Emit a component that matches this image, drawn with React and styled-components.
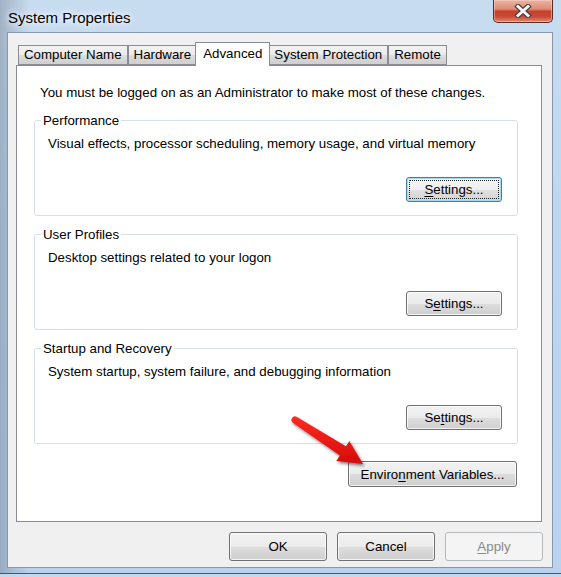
import styled, { createGlobalStyle } from "styled-components";

const GlobalStyle = createGlobalStyle`
  html, body {
    margin: 0;
    padding: 0;
    overflow: hidden;
    background: #c9d3dc;
  }
  * {
    box-sizing: border-box;
  }
`;

const Window = styled.div`
  position: relative;
  width: 561px;
  height: 577px;
  display: flex;
  flex-direction: column;
  padding: 0 8px 9px 7px;
  font-family: "Liberation Sans", Arial, sans-serif;
  font-size: 13.3px;
  color: #000;
  background:
    linear-gradient(to right, rgba(90, 100, 115, 0.35) 0px, rgba(90, 100, 115, 0) 30px),
    linear-gradient(180deg, #c8dcf0 0%, #bed6ee 40%, #b9d3ee 100%);
  box-shadow: inset 0 -3px 0 #c5d9ee, inset 0 -4px 0 #4b5563;
`;

const TitleBar = styled.div`
  height: 33px;
  display: flex;
  align-items: flex-start;
`;

const Title = styled.h1`
  margin: 9px 0 0 1px;
  font-size: 15px;
  font-weight: normal;
  line-height: 17px;
  color: #000;
  text-shadow: 0 0 6px #fff, 0 0 10px #fff;
`;

const CloseButton = styled.button`
  margin-left: auto;
  width: 60px;
  height: 23px;
  padding: 0;
  display: flex;
  align-items: center;
  justify-content: center;
  border: 1px solid #5e2b25;
  border-top: none;
  border-radius: 0 0 5px 5px;
  background: linear-gradient(
    180deg,
    #eab3a2 0%,
    #df8d77 40%,
    #c8402c 52%,
    #c94a35 75%,
    #de8b70 100%
  );
  box-shadow: inset 0 0 0 1px rgba(255, 220, 210, 0.45);
`;

const ClientArea = styled.div`
  flex: 1;
  display: flex;
  flex-direction: column;
  background: #f0f0f0;
  border: 1px solid #8796aa;
  padding: 9px 0 6px 0;
`;

const TabStrip = styled.div`
  display: flex;
  align-items: flex-end;
  height: 24px;
  margin-bottom: -1px;
  padding-left: 10px;
`;

const Tab = styled.div`
  position: relative;
  display: flex;
  align-items: center;
  height: ${(p) => (p.$active ? "24px" : "20px")};
  margin: ${(p) => (p.$active ? "0 -2px" : "0 0 1px 0")};
  padding: ${(p) => (p.$active ? "0 7px 2px" : "0 5px 1px")};
  border: 1px solid #898c95;
  border-bottom: ${(p) => (p.$active ? "none" : "1px solid #898c95")};
  background: ${(p) =>
    p.$active
      ? "#fff"
      : "linear-gradient(180deg, #f2f2f2 0%, #ebebeb 50%, #dddddd 51%, #cfcfcf 100%)"};
  z-index: ${(p) => (p.$active ? 2 : 1)};
  white-space: nowrap;
`;

const Panel = styled.div`
  height: 457px;
  margin: 0 10px 0 8px;
  background: #fff;
  border: 1px solid #898c95;
  padding: 19px 23px 0 17px;
  display: flex;
  flex-direction: column;
`;

const Intro = styled.p`
  margin: 0 0 0 6px;
  line-height: 15px;
`;

const GroupBox = styled.fieldset`
  margin: ${(p) => (p.$first ? "13px" : "11px")} 0 0;
  padding: 0 15px 13px 13px;
  border: 1px solid #d5dfe5;
  border-radius: 3px;
`;

const GroupLabel = styled.legend`
  margin-left: -7px;
  padding: 0 2px;
  line-height: 15px;
`;

const GroupText = styled.p`
  margin: 8px 0 0;
  line-height: 15px;
`;

const ButtonRow = styled.div`
  display: flex;
  justify-content: flex-end;
  margin-top: ${(p) => p.$top || "0"};
  margin-right: ${(p) => p.$right || "0"};
  gap: 10px;
`;

const Button = styled.button`
  position: relative;
  width: ${(p) => p.$width || "96px"};
  height: ${(p) => p.$height || "25px"};
  padding: 0;
  font-family: inherit;
  font-size: 13.3px;
  color: ${(p) => (p.disabled ? "#8a8a8a" : "#000")};
  border: 1px solid
    ${(p) => (p.disabled ? "#b5b9bc" : p.$focused ? "#3c7fb1" : "#707070")};
  border-radius: 3px;
  background: ${(p) =>
    p.disabled
      ? "#f4f4f4"
      : p.$focused
      ? "linear-gradient(180deg, #f6f6f6 0%, #eeeeee 50%, #e0e0e0 51%, #d4d4d4 100%)"
      : "linear-gradient(180deg, #f2f2f2 0%, #ebebeb 50%, #dddddd 51%, #cfcfcf 100%)"};
  box-shadow: ${(p) =>
    p.disabled
      ? "none"
      : p.$focused
      ? "inset 0 0 0 1px #a8d8f2"
      : "inset 0 0 0 1px rgba(255, 255, 255, 0.75)"};

  &::after {
    content: "";
    display: ${(p) => (p.$focused ? "block" : "none")};
    position: absolute;
    inset: 2px;
    border: 1px dotted #222;
    border-radius: 1px;
  }

  u {
    text-decoration-thickness: 1px;
    text-underline-offset: 2px;
  }
`;

const Arrow = styled.svg`
  position: absolute;
  left: 285px;
  top: 408px;
  width: 90px;
  height: 66px;
  overflow: visible;
`;

const CloseGlyph = () => (
  <svg width="18" height="14" viewBox="0 0 18 14">
    <path d="M4 2.5 L14 11.5 M14 2.5 L4 11.5" stroke="#3f3f46" strokeWidth="5.2" strokeLinecap="square" fill="none" />
    <path d="M4 2.5 L14 11.5 M14 2.5 L4 11.5" stroke="#f5f5f5" strokeWidth="3" strokeLinecap="square" fill="none" />
  </svg>
);

const RedArrow = () => (
  <Arrow viewBox="0 0 90 66">
    <defs>
      <linearGradient id="arrowFill" x1="0" y1="0" x2="0" y2="1">
        <stop offset="0" stopColor="#ff2a22" />
        <stop offset="1" stopColor="#d30c0a" />
      </linearGradient>
      <filter id="arrowShadow" x="-20%" y="-20%" width="150%" height="150%">
        <feDropShadow dx="1.5" dy="2" stdDeviation="1.5" floodColor="#000" floodOpacity="0.5" />
      </filter>
    </defs>
    <path
      d="M11.9 9.06 L60.84 38.34 L64.37 32.88 L78 56 L51.33 53.04 L54.86 47.58 L8.1 14.94 A3.5 3.5 0 0 1 11.9 9.06 Z"
      fill="url(#arrowFill)"
      filter="url(#arrowShadow)"
    />
  </Arrow>
);

const groups = [
  {
    label: "Performance",
    text: "Visual effects, processor scheduling, memory usage, and virtual memory",
    before: "",
    key: "S",
    after: "ettings...",
    focused: true,
  },
  {
    label: "User Profiles",
    text: "Desktop settings related to your logon",
    before: "S",
    key: "e",
    after: "ttings...",
  },
  {
    label: "Startup and Recovery",
    text: "System startup, system failure, and debugging information",
    before: "Se",
    key: "t",
    after: "tings...",
  },
];

const tabs = ["Computer Name", "Hardware", "Advanced", "System Protection", "Remote"];

export default function App() {
  return (
    <>
      <GlobalStyle />
      <Window>
        <TitleBar>
          <Title>System Properties</Title>
          <CloseButton aria-label="Close">
            <CloseGlyph />
          </CloseButton>
        </TitleBar>
        <ClientArea>
          <TabStrip>
            {tabs.map((t) => (
              <Tab key={t} $active={t === "Advanced"}>
                {t}
              </Tab>
            ))}
          </TabStrip>
          <Panel>
            <Intro>You must be logged on as an Administrator to make most of these changes.</Intro>
            {groups.map((g, i) => (
              <GroupBox key={g.label} $first={i === 0}>
                <GroupLabel>{g.label}</GroupLabel>
                <GroupText>{g.text}</GroupText>
                <ButtonRow $top="26px">
                  <Button $focused={g.focused}>
                    {g.before}
                    <u>{g.key}</u>
                    {g.after}
                  </Button>
                </ButtonRow>
              </GroupBox>
            ))}
            <ButtonRow $top="17px" $right="1px">
              <Button $width="169px" $height="26px">
                Enviro<u>n</u>ment Variables...
              </Button>
            </ButtonRow>
          </Panel>
          <ButtonRow $top="10px" $right="9px">
            <Button $width="98px" $height="29px">OK</Button>
            <Button $width="98px" $height="29px">Cancel</Button>
            <Button $width="98px" $height="29px" disabled>
              <u>A</u>pply
            </Button>
          </ButtonRow>
        </ClientArea>
        <RedArrow />
      </Window>
    </>
  );
}
